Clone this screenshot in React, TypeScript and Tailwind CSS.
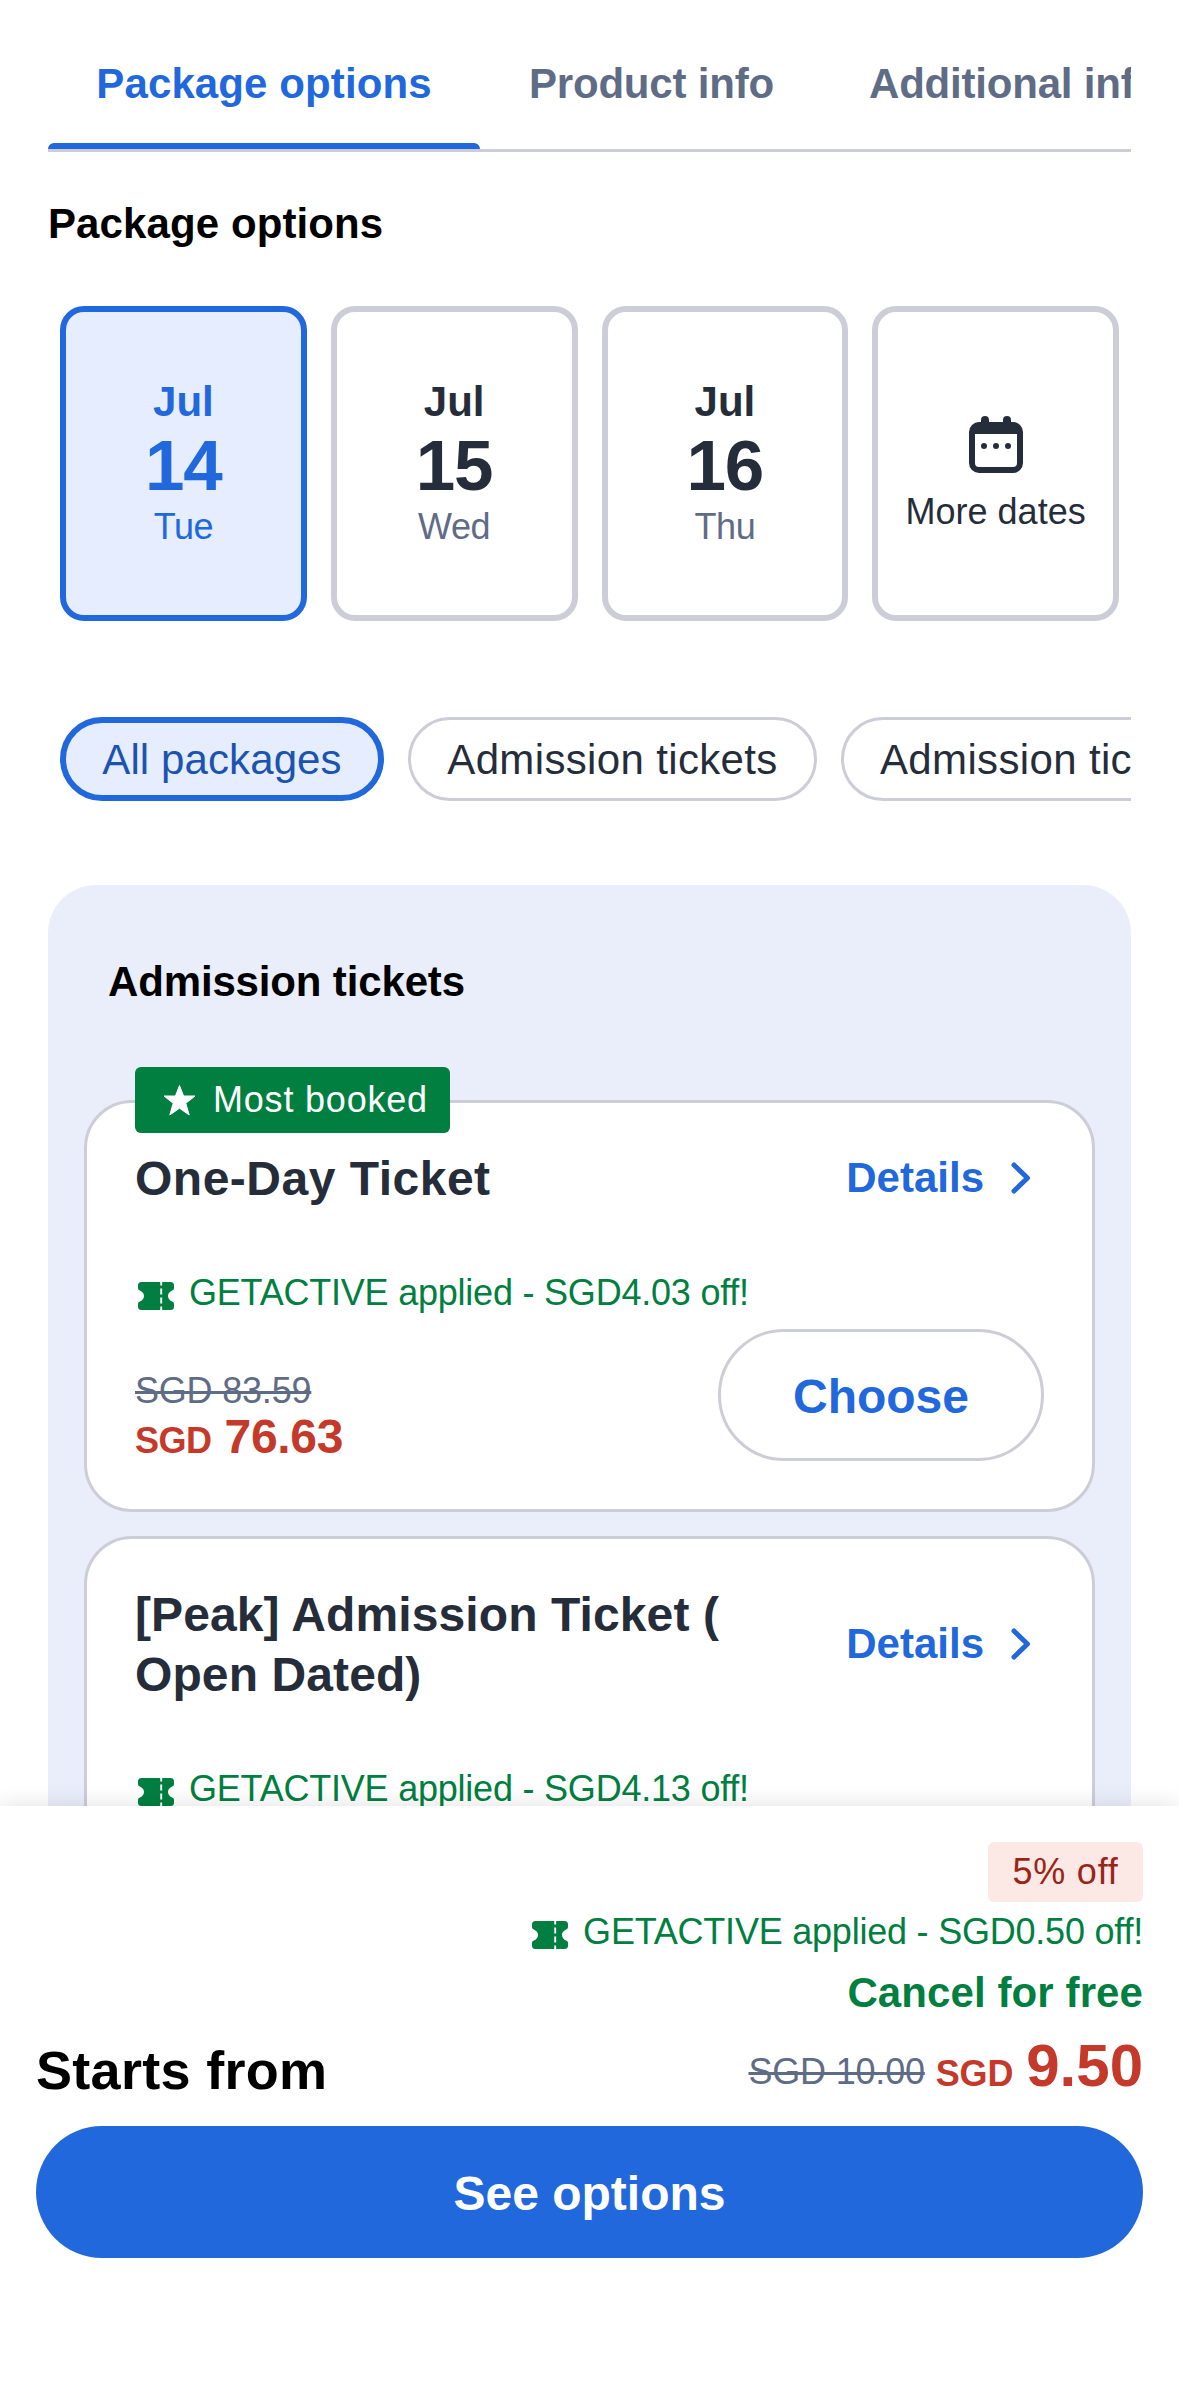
import React from "react";

function CouponIcon() {
  return (
    <svg width="36" height="28" viewBox="0 0 36 28" className="mt-[5px] shrink-0" fill="none">
      <path
        d="M3.5 0H32.5Q36 0 36 3.5V6.2Q36 7.6 34.6 8.2C31.4 9.6 30 11.4 30 14S31.4 18.4 34.6 19.8Q36 20.4 36 21.8V24.5Q36 28 32.5 28H3.5Q0 28 0 24.5V21.8Q0 20.4 1.4 19.8C4.6 18.4 6 16.6 6 14S4.6 9.6 1.4 8.2Q0 7.6 0 6.2V3.5Q0 0 3.5 0Z"
        fill="#007f40"
      />
      <path d="M23.2 0V3.6M23.2 6.4V12.4M23.2 15.4V21.4M23.2 24.4V28" stroke="#fff" strokeWidth="1.9" />
    </svg>
  );
}

function StarIcon() {
  return (
    <svg width="33" height="31" viewBox="0 0 33 31" className="shrink-0">
      <path
        d="M16.5 0.5L20.6 11H32L22.8 18.3L26.2 30L16.5 23.2L6.8 30L10.2 18.3L1 11H12.4Z"
        fill="#fff"
        stroke="#fff"
        strokeWidth="1"
        strokeLinejoin="round"
      />
    </svg>
  );
}

function CalendarIcon() {
  return (
    <svg width="54" height="57" viewBox="0 0 54 57">
      <path
        d="M16 0a4 4 0 0 1 4 4v2h14V4a4 4 0 0 1 8 0v2h2a10 10 0 0 1 10 10v31a10 10 0 0 1-10 10H10A10 10 0 0 1 0 47V16A10 10 0 0 1 10 6h2V4a4 4 0 0 1 4-4ZM6 18v29a4 4 0 0 0 4 4h34a4 4 0 0 0 4-4V18Z"
        fill="#262d3a"
        fillRule="evenodd"
      />
      <circle cx="15" cy="30" r="3" fill="#262d3a" />
      <circle cx="27" cy="30" r="3" fill="#262d3a" />
      <circle cx="39" cy="30" r="3" fill="#262d3a" />
    </svg>
  );
}

function ChevronIcon() {
  return (
    <svg width="20" height="32" viewBox="0 0 20 32" fill="none" className="shrink-0">
      <path d="M3 3L16.5 16L3 29" stroke="#2168dc" strokeWidth="5" strokeLinecap="round" strokeLinejoin="round" />
    </svg>
  );
}

function Coupon({ amount }: { amount: string }) {
  return (
    <div className="flex items-center gap-[15px] text-[36px] leading-[54px] tracking-[-0.22px] text-[#007f40]">
      <CouponIcon />
      <span className="whitespace-nowrap">GETACTIVE applied - {amount} off!</span>
    </div>
  );
}

function Details() {
  return (
    <div className="mr-[13px] flex items-center gap-[27px] text-[42px] leading-[60px] font-bold text-[#2168dc]">
      Details
      <ChevronIcon />
    </div>
  );
}

function DateCard({ day, weekday, active }: { day: string; weekday: string; active?: boolean }) {
  return (
    <div
      className={
        "flex h-[315px] flex-col items-center justify-center rounded-[24px] border-[6px] " +
        (active ? "border-[#2168dc] bg-[#e5edff] text-[#2168dc]" : "border-[#cdcdd7] text-[#262d3a]")
      }
    >
      <div className="text-[42px] leading-[54px] font-bold">Jul</div>
      <div className="text-[71px] leading-[74px] font-bold tracking-[-1px]">{day}</div>
      <div className={"mb-[2px] text-[36px] leading-[47px] tracking-[-0.4px] " + (active ? "" : "text-[#5f6c86]")}>
        {weekday}
      </div>
    </div>
  );
}

export default function App() {
  return (
    <div className="flex h-[2396px] w-[1179px] flex-col overflow-hidden bg-white font-['Liberation_Sans',Arial,sans-serif]">
      <main className="h-[1806px] shrink-0 overflow-hidden px-[48px]">
        <nav className="flex h-[152px] overflow-hidden border-b-[3px] border-[#cdcdd7] text-[42px] leading-[60px] font-bold whitespace-nowrap text-[#5f6c86]">
          <div className="flex w-[432px] shrink-0 flex-col justify-between pt-[54px] text-center tracking-[0.1px] text-[#2168dc]">
            Package options
            <div className="h-[6px] rounded-t-[6px] bg-[#2168dc]" />
          </div>
          <div className="w-[341px] shrink-0 pt-[54px] pl-[49px] tracking-[-0.2px]">Product info</div>
          <div className="shrink-0 pt-[54px] pl-[48px] tracking-[-0.2px]">Additional info</div>
        </nav>

        <h1 className="mt-[42px] text-[42px] leading-[60px] font-bold tracking-[0.1px] text-black">Package options</h1>

        <div className="mx-[12px] mt-[52px] grid grid-cols-4 gap-[24px]">
          <DateCard day="14" weekday="Tue" active />
          <DateCard day="15" weekday="Wed" />
          <DateCard day="16" weekday="Thu" />
          <div className="flex h-[315px] flex-col items-center justify-center gap-[12px] rounded-[24px] border-[6px] border-[#cdcdd7] pt-[27px] text-[36px] leading-[54px] whitespace-nowrap text-[#262d3a]">
            <CalendarIcon />
            More dates
          </div>
        </div>

        <div className="mt-[96px] flex gap-[24px] overflow-hidden pl-[12px] text-[42px] leading-[80px] tracking-[0.35px] whitespace-nowrap text-[#262d3a]">
          <div className="h-[84px] w-[324px] shrink-0 rounded-full border-[6px] border-[#2168dc] bg-[#e5edff] text-center leading-[74px] tracking-[0.1px] text-[#1c53b0]">
            All packages
          </div>
          <div className="h-[84px] w-[409px] shrink-0 rounded-full border-[3px] border-[#cdcdd7] text-center">
            Admission tickets
          </div>
          <div className="h-[84px] w-[520px] shrink-0 rounded-full border-[3px] border-[#cdcdd7] pl-[36px]">
            Admission tickets - Peak
          </div>
        </div>

        <section className="mt-[84px] rounded-t-[48px] bg-[#eaeefb] px-[36px] pt-[67px]">
          <h2 className="ml-[24px] text-[42px] leading-[60px] font-bold tracking-[-0.15px] text-black">Admission tickets</h2>

          <article className="relative mt-[88px] h-[412px] rounded-[48px] border-[3px] border-[#cdcdd7] bg-white px-[48px] pt-[45px]">
            <div className="absolute -top-[36px] left-[48px] flex h-[66px] w-[315px] items-center gap-[17px] rounded-[6px] bg-[#007f40] pl-[28px] text-[36px] tracking-[0.8px] whitespace-nowrap text-white">
              <StarIcon />
              Most booked
            </div>
            <div className="flex items-center justify-between">
              <h3 className="translate-y-px text-[48px] leading-[60px] font-bold tracking-[0.5px] text-[#262d3a]">One-Day Ticket</h3>
              <Details />
            </div>
            <div className="mt-[58px] ml-[3px]">
              <Coupon amount="SGD4.03" />
            </div>
            <div className="mt-[9px] flex justify-between">
              <div className="pt-[39px]">
                <div className="text-[36px] leading-[46px] tracking-[-0.2px] text-[#5f6c86] line-through decoration-[3px]">SGD 83.59</div>
                <div className="flex items-baseline gap-[13px] pt-px text-[36px] leading-[44px] font-bold tracking-[-0.5px] whitespace-nowrap text-[#c4392a]">
                  SGD <span className="text-[48px] tracking-[-0.3px]">76.63</span>
                </div>
              </div>
              <div className="h-[132px] w-[326px] rounded-full border-[3px] border-[#cdcdd7] text-center text-[48px] leading-[130px] font-bold text-[#2168dc]">
                Choose
              </div>
            </div>
          </article>

          <article className="mt-[24px] h-[472px] rounded-[48px] border-[3px] border-[#cdcdd7] bg-white px-[48px] pt-[45px]">
            <div className="flex items-center justify-between">
              <h3 className="translate-y-px text-[48px] leading-[60px] font-bold tracking-[0.1px] whitespace-nowrap text-[#262d3a]">
                [Peak] Admission Ticket (
                <br />
                Open Dated)
              </h3>
              <Details />
            </div>
            <div className="mt-[58px] ml-[3px]">
              <Coupon amount="SGD4.13" />
            </div>
          </article>
        </section>
      </main>

      <footer className="relative flex flex-1 flex-col items-end bg-white px-[36px] pt-[36px] shadow-[0_0_24px_rgba(0,0,0,0.12)]">
        <div className="h-[60px] w-[155px] rounded-[6px] bg-[#fce9e6] text-center text-[36px] leading-[60px] tracking-[0.8px] text-[#9a2418]">
          5% off
        </div>
        <div className="mt-[3px]">
          <Coupon amount="SGD0.50" />
        </div>
        <div className="mt-[4px] text-[42px] leading-[60px] font-bold tracking-[0.1px] text-[#007f40]">Cancel for free</div>
        <div className="mt-[7px] flex w-full items-end justify-between">
          <div className="text-[54px] leading-[72px] font-bold tracking-[0.3px] text-black">Starts from</div>
          <div className="flex items-baseline pb-[4px] font-bold text-[#c4392a]">
            <span className="mr-[11px] -translate-y-[2px] text-[36px] font-normal tracking-[-0.2px] text-[#5f6c86] line-through decoration-[3px]">
              SGD 10.00
            </span>
            <span className="mr-[13px] text-[36px] tracking-[-0.2px]">SGD</span>
            <span className="text-[60px] leading-[72px]">9.50</span>
          </div>
        </div>
        <button className="mt-[20px] h-[132px] w-full rounded-full bg-[#2168dc] pt-[3px] text-[48px] font-bold text-white">
          See options
        </button>
      </footer>
    </div>
  );
}
